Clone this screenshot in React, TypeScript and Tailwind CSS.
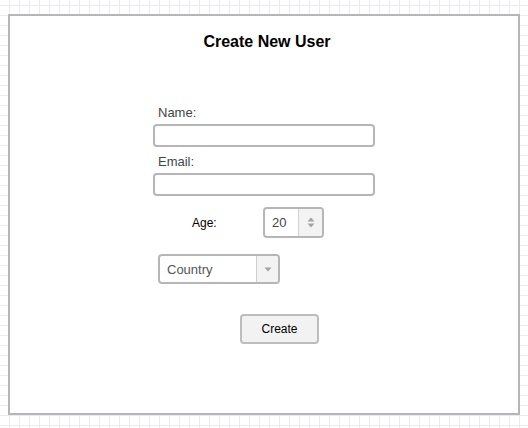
import React from 'react';

export default function App() {
  return (
    <div
      className="w-[528px] h-[428px] overflow-hidden bg-white bg-[linear-gradient(to_right,#e9e9f7_1px,transparent_1px),linear-gradient(to_bottom,#e9e9f7_1px,transparent_1px)] bg-[size:10px_10px] bg-[position:9px_5px] pt-[14px] pl-[8px]"
      style={{ fontFamily: '"Liberation Sans", Arial, sans-serif' }}
    >
      {/* Form frame */}
      <div className="w-[512px] h-[401px] bg-white border-2 border-[#b6b6b6] flex flex-col items-start">
        <h1 className="w-full text-center pl-[6px] mt-[16px] text-[16px] leading-[20px] font-bold text-black">
          Create New User
        </h1>

        <label className="ml-[148px] mt-[53px] text-[13px] leading-[16px] text-[#444]">Name:</label>
        <input
          type="text"
          className="ml-[143px] mt-[3px] w-[222px] h-[23px] border-2 border-[#b6b6b6] rounded-[4px] bg-white outline-none"
        />

        <label className="ml-[148px] mt-[7px] text-[13px] leading-[16px] text-[#444]">Email:</label>
        <input
          type="text"
          className="ml-[143px] mt-[3px] w-[222px] h-[23px] border-2 border-[#b6b6b6] rounded-[4px] bg-white outline-none"
        />

        <div className="ml-[182px] mt-[11px] flex items-center">
          <span className="w-[71px] text-[12px] leading-[16px] text-black pt-[1px]">Age:</span>
          <div className="w-[61px] h-[31px] border-2 border-[#b6b6b6] rounded-[4px] flex overflow-hidden">
            <div className="w-[33px] flex items-center pl-[7px] pt-[1px] text-[13px] text-[#444]">20</div>
            <div className="flex-1 border-l border-[#d0d0d0] bg-[#f3f3f3] flex items-center justify-center">
              <svg width="8" height="11" viewBox="0 0 8 11">
                <path d="M4 0.5 L7.5 4.5 L0.5 4.5 Z" fill="#a3a3a3" />
                <path d="M0.5 6.5 L7.5 6.5 L4 10.5 Z" fill="#a3a3a3" />
              </svg>
            </div>
          </div>
        </div>

        <div className="ml-[148px] mt-[16px] w-[122px] h-[30px] border-2 border-[#b6b6b6] rounded-[4px] flex overflow-hidden">
          <div className="flex-1 flex items-center pl-[7px] pt-[1px] text-[13px] text-[#555]">Country</div>
          <div className="w-[22px] border-l border-[#d0d0d0] bg-[#f3f3f3] flex items-center justify-center">
            <svg width="8" height="5" viewBox="0 0 8 5">
              <path d="M0.5 0.5 L7.5 0.5 L4 4.5 Z" fill="#a3a3a3" />
            </svg>
          </div>
        </div>

        <button className="ml-[230px] mt-[30px] w-[79px] h-[30px] border-2 border-[#bdbdbd] rounded-[4px] bg-[#f2f2f2] text-[12px] text-black">
          Create
        </button>
      </div>
    </div>
  );
}
